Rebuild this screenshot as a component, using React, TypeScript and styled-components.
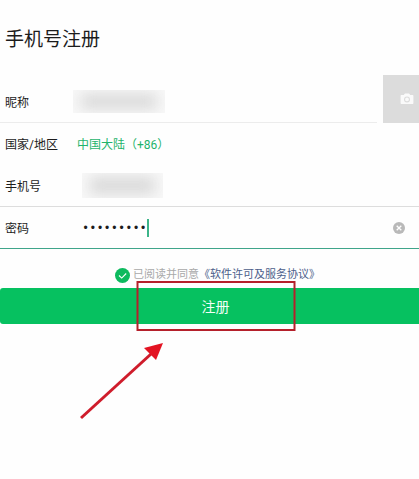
import React from "react";
import styled, { createGlobalStyle } from "styled-components";

const GlobalStyle = createGlobalStyle`
  * { box-sizing: border-box; }
  body {
    margin: 0;
    background: #fefefe;
    color: #1c1c1c;
    font-family: Roboto, "Noto Sans CJK SC", sans-serif;
    font-size: 12px;
    line-height: 20px;
  }
  button, input { font: inherit; color: inherit; }
`;

const Viewport = styled.main`
  overflow: hidden;
  min-height: 100vh;
`;

/* The form is slightly wider than the window and runs off its right edge. */
const Form = styled.form`
  width: calc(100% + 12px);
  padding-top: 26px;
`;

const Title = styled.h1`
  margin: 0;
  padding-left: 5px;
  font-size: 19px;
  font-weight: 400;
  line-height: 28px;
`;

const ProfileRow = styled.div`
  display: flex;
  align-items: flex-end;
  gap: 6px;
  margin-top: 21px;
`;

const Row = styled.div<{ $line?: string }>`
  display: flex;
  flex: 1;
  align-items: center;
  height: 42px;
  padding-left: 5px;
  border-bottom: 1px solid ${(p) => p.$line ?? "transparent"};
`;

const Label = styled.label`
  width: 72px;
  flex: none;
  padding-top: 2px;
`;

const RegionButton = styled.button`
  padding: 2px 0 0;
  border: 0;
  background: none;
  color: #1fb46c;
`;

const Hidden = styled.div<{ $start: number; $width: number; $height: number }>`
  flex: none;
  width: ${(p) => p.$width}px;
  height: ${(p) => p.$height}px;
  margin-left: ${(p) => p.$start}px;
  padding: 4px 8px;
  overflow: hidden;
  background: #f8f8f8;

  &::before {
    content: "";
    display: block;
    height: 100%;
    background: #d9d9d9;
    filter: blur(7px);
  }
`;

const Avatar = styled.button`
  display: flex;
  align-items: center;
  justify-content: center;
  flex: none;
  width: 48px;
  height: 48px;
  padding: 0;
  border: 0;
  background: #dcdcdc;
`;

const Password = styled.input`
  field-sizing: content;
  margin-left: 5px;
  padding: 2px 0 0;
  border: 0;
  outline: 0;
  background: none;
  font-family: "Liberation Mono", monospace;
  font-size: 12px;
`;

const Caret = styled.span`
  flex: none;
  width: 2px;
  height: 18px;
  background: #3cb489;
`;

const Clear = styled.button`
  display: flex;
  margin-left: auto;
  margin-right: 26px;
  padding: 0;
  border: 0;
  background: none;
`;

const Agreement = styled.div`
  display: flex;
  align-items: center;
  justify-content: center;
  margin-top: 16px;
  padding-left: 4px;
  color: #a9a9a9;
  font-size: 11px;
  line-height: 20px;

  label { display: flex; align-items: center; gap: 3px; }
  a { color: #4d5f8b; text-decoration: none; }
`;

const Tick = styled.span`
  position: relative;
  display: flex;

  input {
    appearance: none;
    width: 15px;
    height: 15px;
    margin: 0;
    border-radius: 50%;
    background: #0dba5e;
  }
  svg { position: absolute; inset: 0; pointer-events: none; }
`;

const SubmitArea = styled.div`
  position: relative;
  margin-top: 3px;
`;

const Submit = styled.button`
  display: block;
  width: 100%;
  height: 36px;
  padding: 2px 0 0;
  border: 0;
  border-radius: 3px;
  background: #06c160;
  color: #f3fff8;
  font-size: 14px;
`;

const Highlight = styled.div`
  position: absolute;
  top: -7px;
  left: 50%;
  width: 159px;
  height: 50px;
  border: 2px solid #b5202b;
  transform: translateX(-50%);
  pointer-events: none;
`;

const Arrow = styled.svg`
  position: absolute;
  top: 53px;
  right: calc(50% + 51px);
  pointer-events: none;
`;

export default function App() {
  return (
    <Viewport>
      <GlobalStyle />
      <Form onSubmit={(e) => e.preventDefault()}>
        <Title>手机号注册</Title>
        <ProfileRow>
          <Row $line="#ececec">
            <Label as="span">昵称</Label>
            <Hidden $start={-4} $width={92} $height={23} />
          </Row>
          <Avatar type="button" aria-label="头像">
            <svg width="14" height="12" viewBox="0 0 14 12">
              <path
                fill="#fafafa"
                fillRule="evenodd"
                d="M4.500 1 5.200.4h3.600l.7.6.7 1.100h2.200c.6 0 1 .4 1 1v6.800c0 .6-.4 1-1 1H1.600c-.6 0-1-.4-1-1V3.100c0-.6.4-1 1-1h2.200zM7 3.400a3 3 0 1 0 0 6 3 3 0 0 0 0-6zm0 1.100a1.900 1.900 0 1 1 0 3.800 1.900 1.900 0 0 1 0-3.800z"
              />
            </svg>
          </Avatar>
        </ProfileRow>
        <Row>
          <Label htmlFor="region">国家/地区</Label>
          <RegionButton id="region" type="button">中国大陆（+86）</RegionButton>
        </Row>
        <Row $line="#dddddd">
          <Label as="span">手机号</Label>
          <Hidden $start={5} $width={81} $height={25} />
        </Row>
        <Row $line="#3fa58a">
          <Label htmlFor="password">密码</Label>
          <Password id="password" type="password" defaultValue="123456789" />
          <Caret />
          <Clear type="button" aria-label="清除">
            <svg width="12" height="12" viewBox="0 0 12 12">
              <circle cx="6" cy="6" r="6" fill="#b9b9b9" />
              <path d="m3.700 3.700 4.600 4.600m0-4.600-4.600 4.600" stroke="#fff" strokeWidth="1.300" />
            </svg>
          </Clear>
        </Row>
        <Agreement>
          <label>
            <Tick>
              <input type="checkbox" defaultChecked />
              <svg width="15" height="15" viewBox="0 0 15 15">
                <path d="m4 7.500 2.700 2.600L11.200 5.500" fill="none" stroke="#fff" strokeWidth="1.100" />
              </svg>
            </Tick>
            已阅读并同意
          </label>
          <a href="#terms">《软件许可及服务协议》</a>
        </Agreement>
        <SubmitArea>
          <Submit type="submit">注册</Submit>
          <Highlight />
          <Arrow width="86" height="80" viewBox="0 0 86 80">
            <path d="M2 77 72 13" stroke="#cf1c2b" strokeWidth="3" />
            <path d="M84 2 65 7l12 12z" fill="#e31322" />
          </Arrow>
        </SubmitArea>
      </Form>
    </Viewport>
  );
}
